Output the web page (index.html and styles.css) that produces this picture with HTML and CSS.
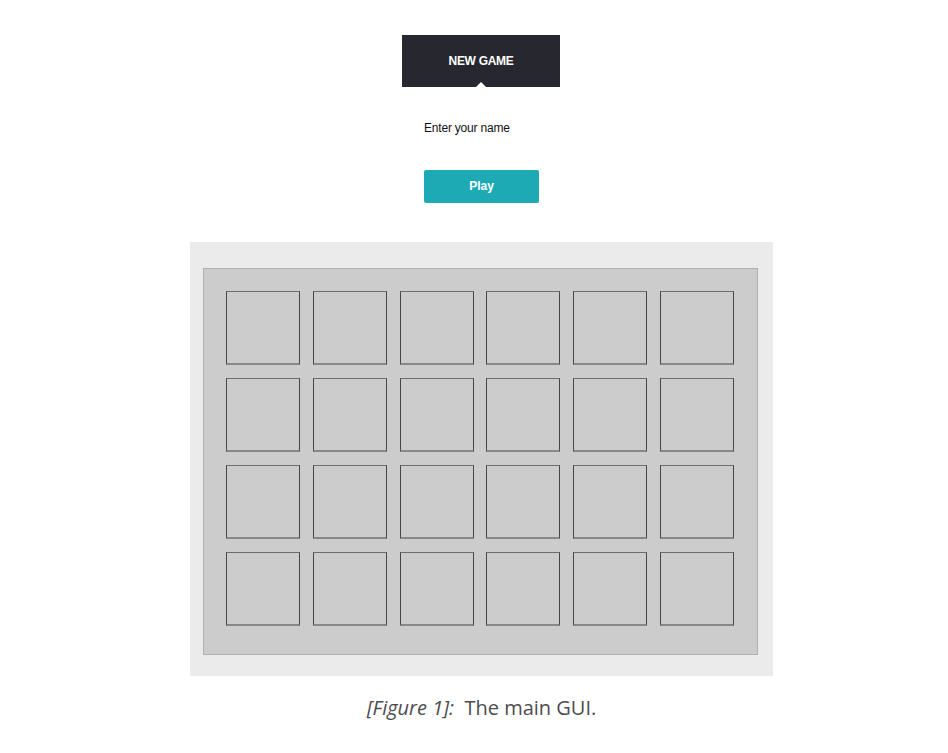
FILE: index.html
```html
<!DOCTYPE html>
<html>
<head>
<meta charset="utf-8">
<link rel="stylesheet" href="styles.css">
</head>
<body>
<div class="page">
  <div class="header">
    <span class="header-title">NEW GAME</span>
    <span class="notch"></span>
  </div>
  <div class="form">
    <div class="label">Enter your name</div>
    <button class="play">Play</button>
  </div>
  <div class="frame">
    <div class="board">
      <div class="card"></div><div class="card"></div><div class="card"></div><div class="card"></div><div class="card"></div><div class="card"></div>
      <div class="card"></div><div class="card"></div><div class="card"></div><div class="card"></div><div class="card"></div><div class="card"></div>
      <div class="card"></div><div class="card"></div><div class="card"></div><div class="card"></div><div class="card"></div><div class="card"></div>
      <div class="card"></div><div class="card"></div><div class="card"></div><div class="card"></div><div class="card"></div><div class="card"></div>
    </div>
  </div>
  <p class="caption"><em>[Figure 1]:</em>&nbsp; The main GUI.</p>
</div>
</body>
</html>
```
FILE: styles.css
```css
html, body {
  margin: 0;
  padding: 0;
  background: #ffffff;
}
.page {
  width: 583px;
  margin-left: 190px;
  padding-top: 35px;
  font-family: "Liberation Sans", Arial, sans-serif;
}
.header {
  position: relative;
  width: 158px;
  height: 52px;
  margin-left: 212px;
  background: #27272f;
  display: flex;
  align-items: center;
  justify-content: center;
}
.header-title {
  color: #ffffff;
  font-weight: bold;
  font-size: 12px;
  letter-spacing: -0.3px;
  margin-top: -1px;
}
.notch {
  position: absolute;
  left: 74px;
  bottom: 0;
  width: 0;
  height: 0;
  border-left: 5px solid transparent;
  border-right: 5px solid transparent;
  border-bottom: 5px solid #ffffff;
}
.form {
  width: 115px;
  margin: 0 auto;
  padding-top: 34px;
}
.label {
  font-size: 12px;
  line-height: 14px;
  color: #111111;
  letter-spacing: -0.2px;
}
.play {
  display: block;
  margin-top: 35px;
  width: 115px;
  height: 33px;
  border: none;
  border-radius: 2px;
  background: #1eaab4;
  color: #ffffff;
  font-family: "Liberation Sans", Arial, sans-serif;
  font-weight: bold;
  font-size: 12px;
  padding: 0 0 2px 0;
  cursor: pointer;
}
.frame {
  margin-top: 39px;
  height: 434px;
  box-sizing: border-box;
  background: #ebebeb;
  padding: 26px 15px 21px 13px;
}
.board {
  height: 387px;
  box-sizing: border-box;
  background: #cccccc;
  border: 1px solid #b0b0b0;
  padding: 22px 22px 28px 22px;
  display: grid;
  grid-template-columns: repeat(6, 74px);
  grid-template-rows: repeat(4, 74px);
  column-gap: 12.8px;
  row-gap: 13px;
}
.card {
  box-sizing: border-box;
  background: #cccccc;
  border: 1px solid #464646;
  border-top-color: #6e6e6e;
  border-bottom: 2px solid #888888;
}
.caption {
  margin: 18px 0 0 0;
  text-align: center;
  font-family: "Open Sans", sans-serif;
  font-size: 20px;
  color: #4d4d4d;
}
.caption em {
  font-style: italic;
}
```
